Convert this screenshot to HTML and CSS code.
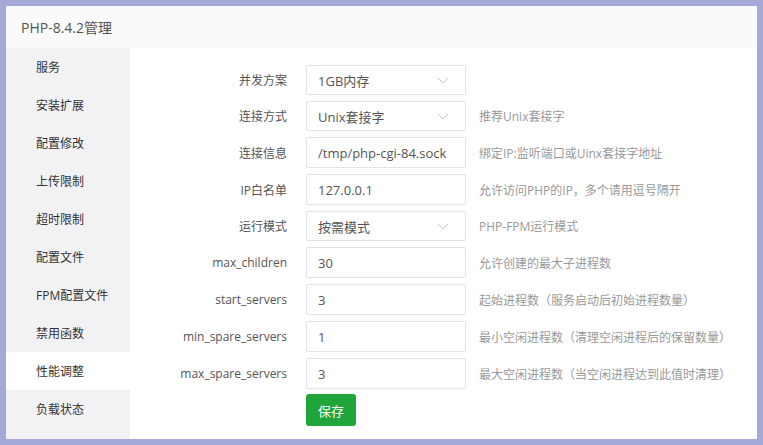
FILE: index.html
```html
<!DOCTYPE html>
<html lang="zh">
<head>
<meta charset="utf-8">
<title>PHP-8.4.2管理</title>
<link rel="stylesheet" href="styles.css">
</head>
<body>
<div class="window">
  <div class="header">PHP-8.4.2管理</div>
  <div class="main">
    <ul class="sidebar">
      <li>服务</li>
      <li>安装扩展</li>
      <li>配置修改</li>
      <li>上传限制</li>
      <li>超时限制</li>
      <li>配置文件</li>
      <li>FPM配置文件</li>
      <li>禁用函数</li>
      <li class="active">性能调整</li>
      <li>负载状态</li>
    </ul>
    <div class="content">
      <div class="row">
        <label class="label">并发方案</label>
        <div class="field select"><span>1GB内存</span><svg class="arrow" viewBox="0 0 12 7" width="12" height="7"><path d="M1 1 L6 6 L11 1" fill="none" stroke="#c4c7cf" stroke-width="1"/></svg></div>
      </div>
      <div class="row">
        <label class="label">连接方式</label>
        <div class="field select"><span>Unix套接字</span><svg class="arrow" viewBox="0 0 12 7" width="12" height="7"><path d="M1 1 L6 6 L11 1" fill="none" stroke="#c4c7cf" stroke-width="1"/></svg></div>
        <span class="hint">推荐Unix套接字</span>
      </div>
      <div class="row">
        <label class="label">连接信息</label>
        <div class="field input">/tmp/php-cgi-84.sock</div>
        <span class="hint">绑定IP:监听端口或Uinx套接字地址</span>
      </div>
      <div class="row">
        <label class="label">IP白名单</label>
        <div class="field input">127.0.0.1</div>
        <span class="hint">允许访问PHP的IP，多个请用逗号隔开</span>
      </div>
      <div class="row">
        <label class="label">运行模式</label>
        <div class="field select"><span>按需模式</span><svg class="arrow" viewBox="0 0 12 7" width="12" height="7"><path d="M1 1 L6 6 L11 1" fill="none" stroke="#c4c7cf" stroke-width="1"/></svg></div>
        <span class="hint">PHP-FPM运行模式</span>
      </div>
      <div class="row">
        <label class="label">max_children</label>
        <div class="field input">30</div>
        <span class="hint">允许创建的最大子进程数</span>
      </div>
      <div class="row">
        <label class="label">start_servers</label>
        <div class="field input">3</div>
        <span class="hint">起始进程数（服务启动后初始进程数量）</span>
      </div>
      <div class="row">
        <label class="label">min_spare_servers</label>
        <div class="field input">1</div>
        <span class="hint">最小空闲进程数（清理空闲进程后的保留数量）</span>
      </div>
      <div class="row">
        <label class="label">max_spare_servers</label>
        <div class="field input">3</div>
        <span class="hint">最大空闲进程数（当空闲进程达到此值时清理）</span>
      </div>
      <div class="actions">
        <button class="btn-save">保存</button>
      </div>
    </div>
  </div>
</div>
</body>
</html>
```
FILE: styles.css
```css
* { box-sizing: border-box; }
html, body { margin: 0; padding: 0; }
body {
  background: #a5a9d8;
  padding: 6px;
  height: 445px;
  font-family: "Open Sans", "Noto Sans CJK SC", sans-serif;
  font-size: 12px;
  color: #555;
}
.window {
  background: #fff;
  height: 433px;
  width: 751px;
  display: flex;
  flex-direction: column;
  overflow: hidden;
}
.header {
  height: 42px;
  flex: none;
  background: #fafafa;
  display: flex;
  align-items: center;
  padding-left: 15px;
  font-size: 14px;
  color: #555;
}
.main {
  flex: 1;
  display: flex;
  min-height: 0;
}
.sidebar {
  list-style: none;
  margin: 0;
  padding: 0;
  width: 124px;
  flex: none;
  background: #f2f2f5;
}
.sidebar li {
  height: 38px;
  line-height: 40px;
  padding-left: 30px;
  color: #333;
  font-size: 12px;
}
.sidebar li.active { background: #fff; }
.content {
  flex: 1;
  padding-top: 17px;
  display: flex;
  flex-direction: column;
  gap: 6px;
}
.row {
  display: flex;
  align-items: center;
}
.label {
  width: 157px;
  text-align: right;
  color: #555;
  flex: none;
}
.field {
  margin-left: 19px;
  width: 160px;
  height: 31px;
  flex: none;
  border: 1px solid #e1e2e7;
  border-radius: 2px;
  display: flex;
  align-items: center;
  padding-left: 11px;
  font-size: 13px;
  color: #555;
}
.field.select {
  height: 30px;
  justify-content: space-between;
  padding-right: 16px;
}
.arrow { display: block; }
.hint {
  margin-left: 13px;
  color: #999;
  font-size: 12px;
}
.actions {
  padding-left: 176px;
  margin-top: -1px;
}
.btn-save {
  width: 50px;
  height: 32px;
  border: none;
  border-radius: 3px;
  background: #20a53a;
  color: #fff;
  font-family: inherit;
  font-size: 13px;
  padding: 0;
}
```
